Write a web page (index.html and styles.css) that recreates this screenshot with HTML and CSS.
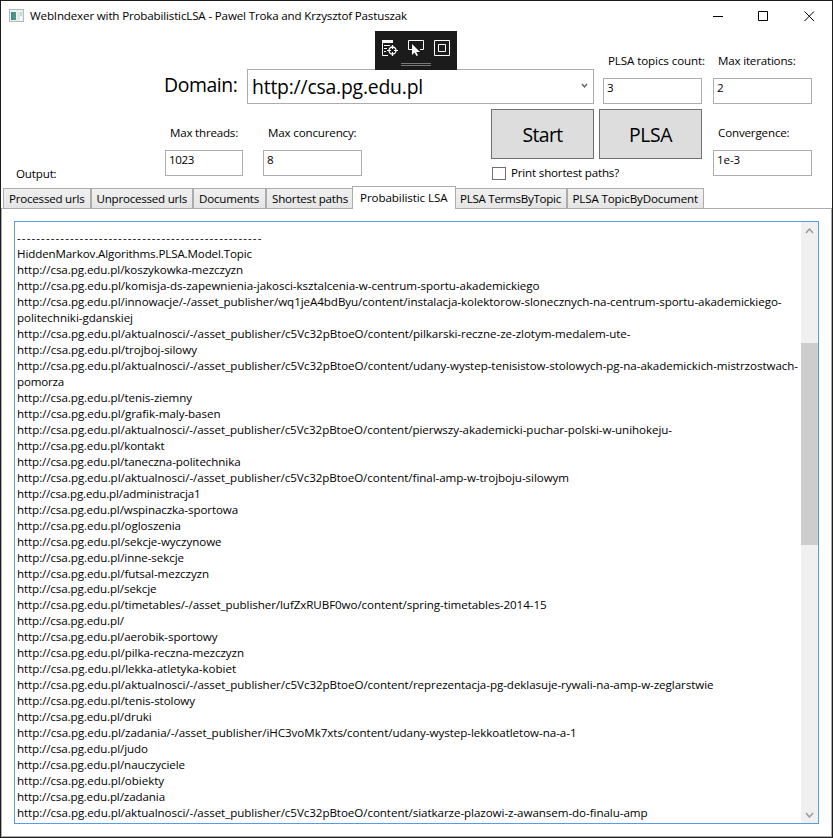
FILE: index.html
```html
<!DOCTYPE html>
<html lang="en">
<head>
<meta charset="utf-8">
<title>WebIndexer with ProbabilisticLSA</title>
<link rel="stylesheet" href="styles.css">
</head>
<body>
<div class="window">
  <header class="titlebar">
    <svg class="app-icon" width="15" height="13" viewBox="0 0 15 13"><rect x=".5" y=".5" width="14" height="12" fill="#eef0f2" stroke="#b4b8bc"/><rect x="2" y="3" width="5" height="8" fill="#4b9a80"/><rect x="2" y="3" width="2" height="8" fill="#4d7f9e"/><rect x="8" y="3" width="3" height="8" fill="#e3e8ee"/><rect x="11" y="3" width="2" height="4" fill="#b9dcc6"/><rect x="11" y="7" width="2" height="4" fill="#f8f8f8"/></svg>
    <span class="caption" data-w="377">WebIndexer with ProbabilisticLSA - Pawel Troka and Krzysztof Pastuszak</span>
    <svg class="controls" width="103" height="12" viewBox="0 0 103 12" fill="none" stroke="#000"><path d="M0 6.5H10M45.500 1.500h9v9h-9zM91.500 1.500l9.500 9.500M101 1.500l-9.500 9.500"/></svg>
  </header>

  <div class="debug-bar">
    <svg width="82" height="39" viewBox="0 0 82 39" fill="none" stroke="#fff">
      <path d="M7 9h11v3H7z" fill="#fff" stroke="none"/>
      <path d="M7.500 12v12.500H13M9 14.500h6M9 17.500h3M9 20.500h2"/>
      <circle cx="17.500" cy="19.500" r="3.500" stroke-width="1.300"/><path d="M17.500 14v4M17.500 21v4M12 19.500h4M19 19.500h4" stroke-width="1.200"/>
      <path d="M37 18.500h-3.500v-9h15v9H45"/>
      <path d="M37 13v11l2.500-2.500 2 3.500 1.500-.8-1.800-3.200H45z" fill="#fff" stroke="none"/>
      <path d="M59.500 9.500h15v15h-15zM63.500 13.500h7v7h-7z"/>
      <path d="M26 32.500h30M26 34.500h30" stroke="#777"/>
    </svg>
  </div>

  <main>
    <div class="form">
      <section class="form-left">
        <div class="domain-row">
          <span class="big domain-label" data-w="73.500">Domain:</span>
          <div class="combo"><span class="big" data-w="171">http://csa.pg.edu.pl</span>
            <svg width="7" height="6" viewBox="0 0 7 6" fill="none" stroke="#606060" stroke-width="1.400"><path d="M1 1l2.500 3L6 1"/></svg>
          </div>
        </div>
        <div class="options-row">
          <span class="output-label" data-w="40.500">Output:</span>
          <div class="field threads"><label data-w="68">Max threads:</label><div class="box"><span data-w="25">1023</span></div></div>
          <div class="field concurrency"><label data-w="88.500">Max concurency:</label><div class="box"><span>8</span></div></div>
          <div class="start">
            <div class="button"><span class="big" data-w="40">Start</span></div>
            <div class="check"><i></i><span data-w="108">Print shortest paths?</span></div>
          </div>
        </div>
      </section>
      <section class="form-mid">
        <div class="field topics"><label data-w="97">PLSA topics count:</label><div class="box"><span>3</span></div></div>
        <div class="button"><span class="big" data-w="43">PLSA</span></div>
      </section>
      <section class="form-right">
        <div class="field iterations"><label data-w="77.500">Max iterations:</label><div class="box"><span>2</span></div></div>
        <div class="field convergence"><label data-w="71.500">Convergence:</label><div class="box"><span data-w="23">1e-3</span></div></div>
      </section>
    </div>

    <nav class="tabs">
      <div class="tab t1"><span data-w="75.500">Processed urls</span></div>
      <div class="tab t2"><span data-w="90.500">Unprocessed urls</span></div>
      <div class="tab t3"><span data-w="60">Documents</span></div>
      <div class="tab t4"><span data-w="76">Shortest paths</span></div>
      <div class="tab t5 active"><span data-w="87.500">Probabilistic LSA</span></div>
      <div class="tab t6"><span data-w="101">PLSA TermsByTopic</span></div>
      <div class="tab t7"><span data-w="125.500">PLSA TopicByDocument</span></div>
    </nav>

    <div class="panel">
      <div class="textbox">
        <div class="lines">
          <p><span data-w="245.500">---------------------------------------------------</span></p>
          <p><span data-w="235">HiddenMarkov.Algorithms.PLSA.Model.Topic</span></p>
          <p><span data-w="226">http://csa.pg.edu.pl/koszykowka-mezczyzn</span></p>
          <p><span data-w="522.500">http://csa.pg.edu.pl/komisja-ds-zapewnienia-jakosci-ksztalcenia-w-centrum-sportu-akademickiego</span></p>
          <p><span data-w="764.500">http://csa.pg.edu.pl/innowacje/-/asset_publisher/wq1jeA4bdByu/content/instalacja-kolektorow-slonecznych-na-centrum-sportu-akademickiego-</span></p>
          <p><span data-w="116">politechniki-gdanskiej</span></p>
          <p><span data-w="613.500">http://csa.pg.edu.pl/aktualnosci/-/asset_publisher/c5Vc32pBtoeO/content/pilkarski-reczne-ze-zlotym-medalem-ute-</span></p>
          <p><span data-w="180">http://csa.pg.edu.pl/trojboj-silowy</span></p>
          <p><span data-w="781">http://csa.pg.edu.pl/aktualnosci/-/asset_publisher/c5Vc32pBtoeO/content/udany-wystep-tenisistow-stolowych-pg-na-akademickich-mistrzostwach-</span></p>
          <p><span data-w="47">pomorza</span></p>
          <p><span data-w="175">http://csa.pg.edu.pl/tenis-ziemny</span></p>
          <p><span data-w="203.500">http://csa.pg.edu.pl/grafik-maly-basen</span></p>
          <p><span data-w="655">http://csa.pg.edu.pl/aktualnosci/-/asset_publisher/c5Vc32pBtoeO/content/pierwszy-akademicki-puchar-polski-w-unihokeju-</span></p>
          <p><span data-w="147.500">http://csa.pg.edu.pl/kontakt</span></p>
          <p><span data-w="223.500">http://csa.pg.edu.pl/taneczna-politechnika</span></p>
          <p><span data-w="552">http://csa.pg.edu.pl/aktualnosci/-/asset_publisher/c5Vc32pBtoeO/content/final-amp-w-trojboju-silowym</span></p>
          <p><span data-w="183.500">http://csa.pg.edu.pl/administracja1</span></p>
          <p><span data-w="221">http://csa.pg.edu.pl/wspinaczka-sportowa</span></p>
          <p><span data-w="164">http://csa.pg.edu.pl/ogloszenia</span></p>
          <p><span data-w="204.500">http://csa.pg.edu.pl/sekcje-wyczynowe</span></p>
          <p><span data-w="167">http://csa.pg.edu.pl/inne-sekcje</span></p>
          <p><span data-w="192">http://csa.pg.edu.pl/futsal-mezczyzn</span></p>
          <p><span data-w="139.500">http://csa.pg.edu.pl/sekcje</span></p>
          <p><span data-w="529.500">http://csa.pg.edu.pl/timetables/-/asset_publisher/lufZxRUBF0wo/content/spring-timetables-2014-15</span></p>
          <p><span data-w="107">http://csa.pg.edu.pl/</span></p>
          <p><span data-w="200.500">http://csa.pg.edu.pl/aerobik-sportowy</span></p>
          <p><span data-w="227">http://csa.pg.edu.pl/pilka-reczna-mezczyzn</span></p>
          <p><span data-w="219">http://csa.pg.edu.pl/lekka-atletyka-kobiet</span></p>
          <p><span data-w="696.500">http://csa.pg.edu.pl/aktualnosci/-/asset_publisher/c5Vc32pBtoeO/content/reprezentacja-pg-deklasuje-rywali-na-amp-w-zeglarstwie</span></p>
          <p><span data-w="178">http://csa.pg.edu.pl/tenis-stolowy</span></p>
          <p><span data-w="134.500">http://csa.pg.edu.pl/druki</span></p>
          <p><span data-w="559.500">http://csa.pg.edu.pl/zadania/-/asset_publisher/iHC3voMk7xts/content/udany-wystep-lekkoatletow-na-a-1</span></p>
          <p><span data-w="131">http://csa.pg.edu.pl/judo</span></p>
          <p><span data-w="168">http://csa.pg.edu.pl/nauczyciele</span></p>
          <p><span data-w="147">http://csa.pg.edu.pl/obiekty</span></p>
          <p><span data-w="148">http://csa.pg.edu.pl/zadania</span></p>
          <p><span data-w="630.500">http://csa.pg.edu.pl/aktualnosci/-/asset_publisher/c5Vc32pBtoeO/content/siatkarze-plazowi-z-awansem-do-finalu-amp</span></p>
        </div>
        <div class="scrollbar">
          <svg width="9" height="6" viewBox="0 0 9 6" fill="none" stroke="#9a9a9a" stroke-width="1.500"><path d="M1 5l3.500-4L8 5"/></svg>
          <div class="thumb"></div>
          <svg width="9" height="6" viewBox="0 0 9 6" fill="none" stroke="#9a9a9a" stroke-width="1.500"><path d="M1 1l3.500 4L8 1"/></svg>
        </div>
      </div>
    </div>
  </main>
</div>
<script src="fit.js"></script>
</body>
</html>
```
FILE: styles.css
```css
* { box-sizing: border-box; }
body {
  margin: 0;
  background: #fff;
  color: #000;
  font: 11.6px/16px "Open Sans", "Noto Sans", sans-serif;
  white-space: nowrap;
}
.window {
  position: relative;
  width: 833px;
  height: 838px;
  border: 1px solid #1b1b1b;
  display: flex;
  flex-direction: column;
  overflow: hidden;
}
.titlebar {
  height: 29px;
  flex: none;
  display: flex;
  align-items: center;
  padding: 0 16px 0 8px;
}
.caption { margin-left: 6px; }
.controls { margin-left: auto; }
.debug-bar {
  position: absolute;
  left: 374px;
  top: 30px;
  width: 82px;
  height: 39px;
  background: #1b1b1c;
}
.debug-bar svg { display: block; }
main { flex: 1; display: flex; flex-direction: column; min-height: 0; }
.form { display: flex; height: 155px; flex: none; }
.form-left { width: 593px; padding-top: 39px; }
.big { font-size: 19.4px; line-height: 26px; }
.domain-row { display: flex; height: 35px; }
.domain-label { margin: 3px 0 0 163px; width: 83px; flex: none; }
.combo {
  width: 347px;
  border: 1px solid #acacac;
  display: flex;
  justify-content: space-between;
  padding: 4px 5px 0 4px;
}
.combo svg { margin-top: 9px; }
.options-row { display: flex; }
.output-label { margin: 62px 0 0 15px; width: 149px; }
.field { display: flex; flex-direction: column; }
.field label { margin-left: 5px; height: 16px; }
.box {
  height: 26px;
  margin-top: 9px;
  border: 1px solid #abadb3;
  padding: 1px 3px;
}
.options-row .field { padding-top: 21px; }
.threads { width: 78px; }
.concurrency { width: 99px; margin-left: 20px; }
.start { width: 103px; margin: 5px 0 0 129px; }
.button {
  width: 103px;
  height: 50px;
  border: 1px solid #707070;
  background: #ddd;
  display: flex;
  align-items: center;
  justify-content: center;
  padding-top: 2px;
}
.check { display: flex; align-items: center; margin: 6px 0 0 1px; }
.check i { width: 14px; height: 13px; border: 1px solid #707070; margin-right: 5px; flex: none; }
.form-mid { margin-left: 5px; width: 103px; padding-top: 23px; }
.topics { margin-left: 4px; }
.form-mid .button { margin-top: 5px; }
.form-right { margin-left: 11px; width: 99px; padding-top: 23px; }
.convergence { margin-top: 21px; }
.tabs {
  display: flex;
  align-items: flex-end;
  height: 24px;
  margin: 0 0 -1px 2px;
  flex: none;
  position: relative;
}
.tab {
  height: 21px;
  border: 1px solid #acacac;
  background: linear-gradient(#f0f0f0, #e5e5e5);
  padding: 2px 0 0 5px;
  flex: none;
}
.tab.active {
  height: 23px;
  background: #fff;
  border-bottom: 0;
  z-index: 1;
  padding: 3px 0 0 7px;
  margin: 0 -1px 0 -1px;
}
.t1 { width: 88px; }
.t2 { width: 102px; padding-left: 4.5px; }
.t3 { width: 73px; }
.t4 { width: 87px; }
.t5 { width: 104px; }
.t6 { width: 112px; padding-left: 4px; }
.t7 { width: 137px; padding-left: 4.5px; }
.panel {
  flex: 1;
  min-height: 0;
  border: 1px solid #acacac;
  padding: 12px;
}
.textbox {
  height: 603px;
  width: 805px;
  border: 1px solid #569de5;
  display: flex;
  justify-content: space-between;
}
.lines { padding: 8.16px 0 0 2px; line-height: 15.97px; overflow: hidden; width: 786px; flex: none; }
.lines p { margin: 0; }
.scrollbar {
  width: 17px;
  background: #f0f0f0;
  display: flex;
  flex-direction: column;
  align-items: center;
  padding: 6px 0 5px;
}
.thumb { width: 17px; height: 202px; margin: 109px 0 auto; background: #cdcdcd; }
```
FILE: fit.js
```js
// Tracks each string so it takes the width it has in the native dialog font.
document.querySelectorAll('[data-w]').forEach(function (el) {
  var range = document.createRange();
  range.selectNodeContents(el);
  var natural = range.getBoundingClientRect().width;
  var step = (Number(el.dataset.w) - natural) / el.textContent.length;
  el.style.letterSpacing = step.toFixed(4) + 'px';
});
```
